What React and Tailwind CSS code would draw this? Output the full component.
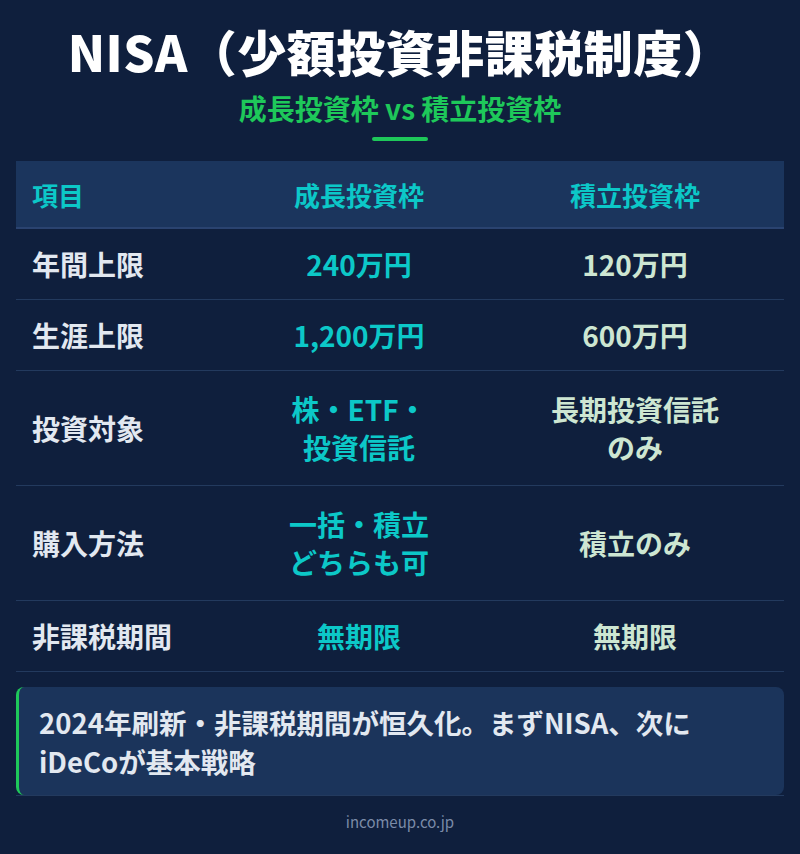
import React from "react";

const rows = [
  { label: "年間上限", growth: ["240万円"], tsumitate: ["120万円"] },
  { label: "生涯上限", growth: ["1,200万円"], tsumitate: ["600万円"] },
  { label: "投資対象", growth: ["株・ETF・", "投資信託"], tsumitate: ["長期投資信託", "のみ"] },
  { label: "購入方法", growth: ["一括・積立", "どちらも可"], tsumitate: ["積立のみ"] },
  { label: "非課税期間", growth: ["無期限"], tsumitate: ["無期限"] },
];

function Cell({ lines, className }) {
  return (
    <div className={`flex flex-col items-center justify-center text-center ${className}`}>
      {lines.map((l) => (
        <span key={l}>{l}</span>
      ))}
    </div>
  );
}

export default function App() {
  return (
    <div
      className="w-[800px] h-[854px] bg-[#0f1f3d] px-4 pt-[26px] flex flex-col items-center"
      style={{ fontFamily: '"Noto Sans CJK JP", "Noto Sans", sans-serif' }}
    >
      <h1 className="text-[49px] leading-none font-black text-white tracking-[0.5px]">
        NISA（少額投資非課税制度）
      </h1>
      <p className="mt-[15px] text-[28px] leading-[36px] font-bold text-[#1ec85a]">
        成長投資枠 vs 積立投資枠
      </p>
      <div className="mt-[11px] w-14 h-1 rounded-full bg-[#1ec85a]" />

      <div className="mt-[20px] w-full">
        <div className="grid grid-cols-[216px_254px_298px] h-[68px] bg-[#1b355d] border-b-2 border-[#2a4370] text-[26px] font-bold text-[#0cc8c8]">
          <div className="flex items-center px-4">項目</div>
          <div className="flex items-center justify-center">成長投資枠</div>
          <div className="flex items-center justify-center">積立投資枠</div>
        </div>

        {rows.map((r) => {
          const multi = r.growth.length > 1 || r.tsumitate.length > 1;
          return (
            <div
              key={r.label}
              className={`grid grid-cols-[216px_254px_298px] border-b border-[#233a5e] text-[28px] font-bold leading-[38px] ${
                multi ? "py-[19px]" : "py-[16px]"
              }`}
            >
              <div className="flex items-center px-4 text-[#e2e8f0]">{r.label}</div>
              <Cell lines={r.growth} className="text-[#0cc8c8]" />
              <Cell lines={r.tsumitate} className="text-[#cde6d2]" />
            </div>
          );
        })}

        <div className="mt-[15px] border-b border-[#233a5e]">
          <div className="rounded-lg border-l-[3px] border-[#1ec85a] bg-[#1b345b] pl-5 pr-4 pt-[16px] pb-[14px] text-[27.5px] leading-[39px] font-bold text-[#e2e8f0]">
            2024年刷新・非課税期間が恒久化。まずNISA、次に
            <br />
            iDeCoが基本戦略
          </div>
        </div>

        <p className="mt-[15px] text-center text-[15px] text-[#7b8ba8]">incomeup.co.jp</p>
      </div>
    </div>
  );
}
